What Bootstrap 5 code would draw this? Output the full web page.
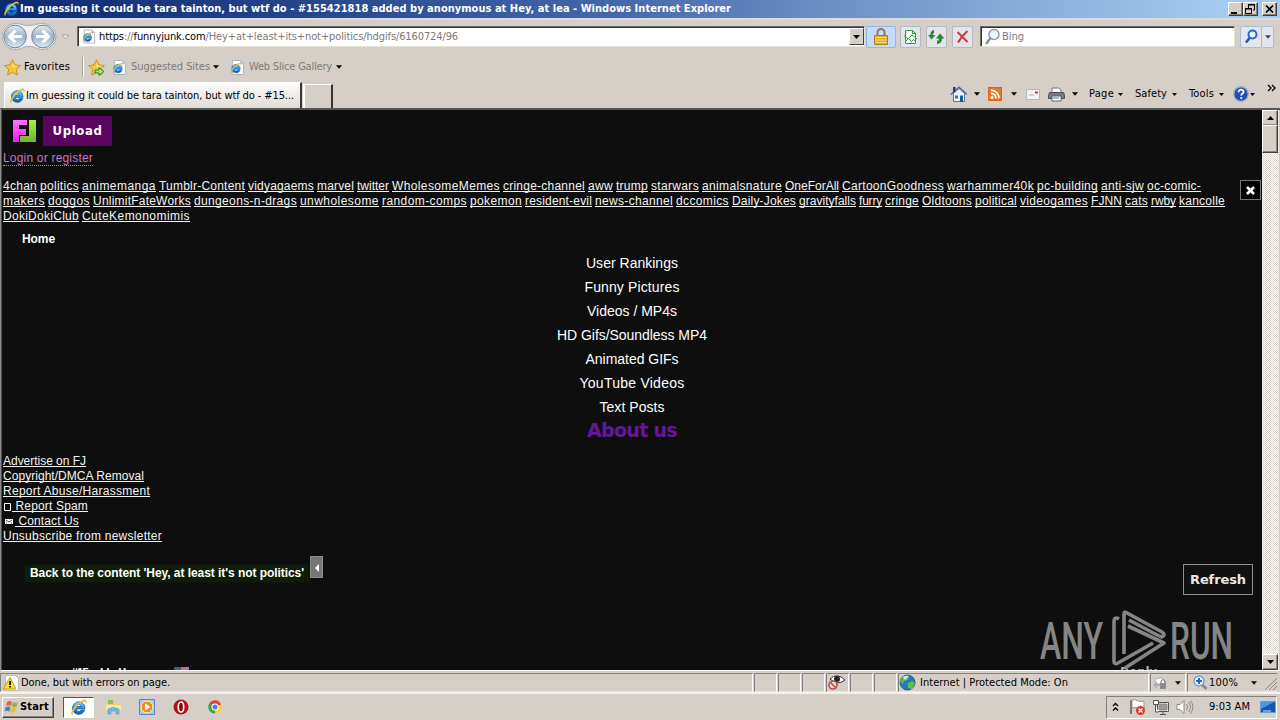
<!DOCTYPE html>
<html lang="en">
<head>
<meta charset="utf-8">
<meta name="viewport" content="width=device-width, initial-scale=1">
<title>Windows Internet Explorer</title>
<link href="https://cdn.jsdelivr.net/npm/bootstrap@5.3.0/dist/css/bootstrap.min.css" rel="stylesheet">
<style>
:root{--face:#d5cfc8;--ui:"DejaVu Sans Condensed","DejaVu Sans",sans-serif;--page:#0e0e0e}
body{width:1280px;height:720px;overflow:hidden;background:var(--face);font:11px/14px var(--ui);color:#000}
svg{display:block;flex:none}
[data-w]{display:inline-block;white-space:pre;flex:none}
.gray{color:#7d7a76}
.titlebar{height:18px;background:linear-gradient(90deg,#0d2a70 0,#1f3f86 240px,#4469aa 620px,#6f91c6 840px,#a6caf0 1230px);color:#fff;font-weight:700;padding-left:3px}
.winbtn{width:15px;height:14px;background:var(--face);border:1px solid;border-color:#fff #404040 #404040 #fff;box-shadow:inset -1px -1px #858078}
.addressrow{height:35px;border-top:2px solid #d8dce0;padding-left:2px}
.field{height:21px;background:#fff;border:1px solid;border-color:#6e6a64 #e4e4da #e4e4da #6e6a64;box-shadow:inset 1px 1px #333}
.dropbtn{width:15px;height:17px;background:var(--face);border:1px solid;border-color:#fff #404040 #404040 #fff}
.toolbtn{width:21px;height:22px;border:1px solid #b4b8c0;border-radius:2px;background:#e4e5ea}
.lockbtn{width:30px;height:22px;background:#c3dcfb;border:1px solid #93b6e4;border-radius:2px}
.favrow{height:28px;padding-left:4px}
.tabrow{height:27px;padding-left:4px}
.tabon{width:298px;height:26px;background:linear-gradient(#fdfdfd,#e0dcd6);border-right:2px solid #3c3a38;border-top:1px solid #fff;border-left:1px solid #fff;padding-left:4px}
.tabnew{width:30px;height:24px;border-top:1px solid #fff;border-left:2px solid #fff;border-right:2px solid #383634;margin-left:1px}
.view{height:563px;border-top:2px solid #565450;border-left:1px solid #8c8c8c;border-bottom:1px solid #fff}
.webpage{width:1261px;background:var(--page);border-left:1px solid #4c4c4c;color:#fff;font:12px/15px "Liberation Sans",Arial,sans-serif;padding-left:1px;overflow:hidden;position:relative}
.webpage a{color:#f4f4f4;text-decoration:underline 1px;text-underline-offset:1px;text-decoration-skip-ink:none}
.upload{width:69px;height:30px;background:#5b045f;font:700 13px/30px "DejaVu Sans Condensed","DejaVu Sans",sans-serif;color:#fff}
.login{color:#cd70cb;border-bottom:1px dotted #9a8a9e;line-height:14px}
.boards{gap:3px}
.closebox{width:21px;height:20px;border:1px solid #777;background:#000}
.menu{font-size:14px;line-height:24px;width:1258px}
.about{font:700 19px/22px "DejaVu Sans",sans-serif;color:#641797}
.back{background:#0f1c07;height:17px;line-height:17px;font-weight:700;padding:0 5px;box-shadow:0 0 2px #0f1c07}
.collapse-tab{width:13px;height:22px;background:#767676;border:1px solid #8e8e8e}
.refresh{width:70px;height:31px;border:1px solid #909090;background:#111;font:700 13px/29px "DejaVu Sans",sans-serif;color:#e8e8e8}
.watermark{left:1036px;top:498px}
.scroller{width:17px;background:repeating-conic-gradient(#fff 0 25%,#d9d4cd 0 50%) 0 0/2px 2px}
.sbtn{width:16px;height:16px;background:var(--face);border:1px solid;border-color:#fff #404040 #404040 #fff;box-shadow:inset -1px -1px #8c877f}
.sthumb{height:28px;margin-top:-1px}
.status{height:23px;padding-top:1px;border-top:1px solid #d5cfc8;border-bottom:2px solid #f4f2ee}
.cell{height:19px;border:1px solid;border-color:#85817c #fff #e9e6e1 #85817c;margin-right:1px}
.taskbar{height:26px}
.start{width:52px;height:21px;border:1px solid;border-color:#fff #404040 #404040 #fff;box-shadow:inset -1px -1px #8a857d;font-weight:700;margin-left:2px}
.taskon{width:31px;height:21px;background:#fff;border:1px solid;border-color:#555 #fff #fff #555}
.tray{width:171px;height:23px;border:1px solid;border-color:#85817c #fff #fff #85817c}
</style>
</head>
<body class="d-flex flex-column">
<svg width="0" height="0" class="position-absolute">
  <defs>
    <linearGradient id="blue" x2="0" y2="1"><stop stop-color="#7fdcfb"/><stop offset=".5" stop-color="#2b9ce6"/><stop offset="1" stop-color="#1250a8"/></linearGradient>
    <linearGradient id="ball" x2="0" y2="1"><stop stop-color="#e4eaf1"/><stop offset=".5" stop-color="#9fb3ca"/><stop offset="1" stop-color="#d5ecf7"/></linearGradient>
    <symbol id="ie" viewBox="0 0 16 16"><path d="M13.800 10.400C12.800 13 10.900 14.300 8.300 14.300 4.800 14.300 2.500 12 2.500 8.600S5 2.800 8.400 2.800s5.700 2.300 5.500 6.500H6c.1 1.500 1 2.500 2.400 2.500.9 0 1.600-.5 2-1.400zM6.100 7.100h4.500C10.400 5.800 9.600 5.100 8.400 5.100S6.300 5.800 6.100 7.100z" fill="url(#blue)" stroke="#1766b5" stroke-width=".9"/><path d="M2.600 14.800C.2 14.500 1.300 10.800 4.600 7 8.500 2.500 13.300-.2 15 1.100c.9.800.5 2-.2 3.200.3-1.500 0-2.200-1.100-2.100-2 .3-5.300 2.600-8 5.700C3.200 10.900 2 13.500 2.600 14.800z" fill="#f8c832" stroke="#a88a20" stroke-width=".2"/></symbol>
    <symbol id="iepage" viewBox="0 0 16 16"><path d="M2.500.5h9l3 3v12h-12z" fill="#fff" stroke="#a8b0ba"/><path d="M11.500.5v3h3" fill="none" stroke="#a8b0ba"/><use href="#ie" x="0" y="2.500" width="12.500" height="12.500"/></symbol>
    <symbol id="star" viewBox="0 0 16 16"><path d="M8 .8l2.200 4.700 5.200.7-3.800 3.600 1 5.200L8 12.500 3.400 15l1-5.200L.6 6.200l5.200-.7z" fill="#fbc637" stroke="#c98313" stroke-width=".8"/><path d="M8 3l1.500 3.200 3 .4-4.500 1z" fill="#ffed9c"/></symbol>
    <symbol id="down" viewBox="0 0 7 4"><path d="M0 0h7L3.500 4z"/></symbol>
  </defs>
</svg>

<header class="titlebar d-flex align-items-center">
  <svg width="16" height="16"><use href="#ie"/></svg>
  <span data-w="711" style="margin-left:1px">Im guessing it could be tara tainton, but wtf do - #155421818 added by anonymous at Hey, at lea - Windows Internet Explorer</span>
  <div class="d-flex ms-auto" style="margin-right:3px">
    <div class="winbtn"><svg width="12" height="12"><path d="M2 9h6v2H2z"/></svg></div>
    <div class="winbtn me-1"><svg width="12" height="12" fill="none" stroke="#000"><path d="M4.500 5V1.500h6V7H9M4 2h7M1.500 5.500h6v5h-6zM1 6h7"/></svg></div>
    <div class="winbtn"><svg width="12" height="12" fill="none" stroke="#000" stroke-width="1.700"><path d="M3 2.500l7 7m0-7l-7 7"/></svg></div>
  </div>
</header>

<div class="addressrow d-flex align-items-center">
  <svg width="75" height="30" viewBox="0 0 75 30">
    <path d="M13 1.500c7 0 7 2 14 2s7-2 14-2a13 13 0 010 26c-7 0-7-3-14-3s-7 3-14 3a13 13 0 010-26z" fill="#f1f1f2" stroke="#a9a8ab"/>
    <g stroke="#73849a"><circle cx="13" cy="14.500" r="11.300" fill="url(#ball)"/><circle cx="41" cy="14.500" r="11.300" fill="url(#ball)"/></g>
    <g fill="none" stroke="#fff" stroke-width="3"><path d="M20 14.500H8m5.500-6l-6 6 6 6"/><path d="M34 14.500h12m-5.500-6l6 6-6 6"/></g>
    <path d="M60 13h7l-3.500 4z" fill="#eee" stroke="#a7a39d"/>
  </svg>
  <div class="field d-flex align-items-center" style="width:788px">
    <svg class="ms-1" width="14" height="15"><use href="#iepage"/></svg>
    <span class="gray" style="margin-left:3px" data-w="359"><span class="text-black">https</span>://<span class="text-black">funnyjunk.com</span>/Hey+at+least+its+not+politics/hdgifs/6160724/96</span>
    <div class="dropbtn ms-auto d-flex align-items-center justify-content-center"><svg width="7" height="4"><use href="#down"/></svg></div>
  </div>
  <div class="lockbtn d-flex justify-content-center align-items-center" style="margin-left:1px"><svg width="16" height="17"><path d="M4.500 8V4.500a3.500 3.500 0 017 0V8" fill="none" stroke="#867a5e" stroke-width="2"/><path d="M1.500 7.500h13v9h-13z" fill="#e8ac2c" stroke="#ae7a17"/><path d="M2 9.500h12M2 12h12M2 14.500h12" stroke="#f9d874"/></svg></div>
  <div class="toolbtn" style="margin-left:4px"><svg width="19" height="20" fill="#f6fff4" stroke="#3a953f"><path d="M4.500 3.500h7l3 3v10h-10zM11.500 3.500v3h3"/><path d="M4.500 14.500l3-3 3 3 2-2 2 2M3 8.500l4 3.500 4-4 5 4" fill="none"/></svg></div>
  <div class="toolbtn" style="margin-left:5px"><svg width="19" height="20" fill="#278a2e"><path d="M7 3v3.500H5.800V8H8.500l-4 4.500L1 8h2.300Q3.300 3.800 7 3z"/><path d="M10 17v-3.500h1.700V11.500H9L13 6.500l4.500 5h-2.500q0 5-5 5.500z"/></svg></div>
  <div class="toolbtn" style="margin-left:5px"><svg width="19" height="20" fill="none" stroke="#c93640" stroke-width="2"><path d="M4.500 5l10 10m0-11C10 8 7 12 5 15.500"/></svg></div>
  <div class="field d-flex align-items-center" style="width:255px;margin-left:7px"><svg width="18" height="18" style="margin-left:2px"><circle cx="11" cy="6.500" r="5" fill="#edf6ff" stroke="#8a9ab5" stroke-width="1.500"/><path d="M7.500 10L3 16" stroke="#8c8792" stroke-width="2.200"/></svg><span class="gray" data-w="22" style="margin-left:1px">Bing</span></div>
  <div class="toolbtn" style="margin-left:5px;width:22px;border-color:#a9bcdc"><svg width="20" height="20"><circle cx="11.500" cy="7.500" r="4" fill="#e8f4ff" stroke="#2a68c8" stroke-width="2"/><path d="M8.500 11L5 15.500" stroke="#2355a8" stroke-width="2.500"/></svg></div>
  <div class="toolbtn d-flex align-items-center justify-content-center" style="width:12px;border-color:#a9bcdc;border-left:0"><svg width="6" height="4" fill="#1e4c93"><use href="#down"/></svg></div>
</div>

<div class="favrow d-flex align-items-center">
  <svg width="17" height="17"><use href="#star"/></svg>
  <span data-w="46" style="margin-left:3px">Favorites</span>
  <div style="width:2px;height:20px;background:#fff;border-left:1px solid #aaa69f;margin:0 4px 0 12px"></div>
  <svg width="17" height="17"><use href="#star"/><path d="M7 11h4V8.500l5 4-5 4V14H7z" fill="#a5e45a" stroke="#27871f"/></svg>
  <svg width="15" height="15" style="margin-left:7px"><use href="#iepage"/></svg>
  <span class="gray" data-w="79" style="margin-left:4px">Suggested Sites</span>
  <svg width="6" height="4" style="margin-left:3px"><use href="#down"/></svg>
  <svg width="15" height="15" style="margin-left:11px"><use href="#iepage"/></svg>
  <span class="gray" data-w="83" style="margin-left:4px">Web Slice Gallery</span>
  <svg width="6" height="4" style="margin-left:4px"><use href="#down"/></svg>
</div>

<div class="tabrow d-flex align-items-end">
  <div class="tabon d-flex align-items-center"><svg width="16" height="16"><use href="#ie"/></svg><span data-w="268" style="margin-left:1px">Im guessing it could be tara tainton, but wtf do - #15...</span></div>
  <div class="tabnew"></div>
  <div class="d-flex align-items-center ms-auto" style="height:28px">
    <svg width="17" height="17"><path d="M3.500 7.500v8h11v-8L9 2.500z" fill="#eef3fb" stroke="#60759c"/><path d="M.8 8.500L9 1.200l8 7.300" fill="none" stroke="#53698f" stroke-width="1.400"/><path d="M3 1h2.500v4L3 7z" fill="#263a82"/><path d="M10 9.500h3V16h-3z" fill="#1a5d8c"/><path d="M5 9.500h3v3H5z" fill="#586e94"/></svg>
    <svg width="6" height="4" style="margin-left:7px"><use href="#down"/></svg>
    <svg width="14" height="14" style="margin-left:8px" fill="none" stroke="#fff" stroke-width="1.700"><rect width="14" height="14" rx="2" fill="#ea7523" stroke="#c85713" stroke-width="1"/><path d="M3 3.200a8 8 0 018 8M3 6.400a5 5 0 015 5"/><circle cx="4" cy="10.500" r=".7"/></svg>
    <svg width="6" height="4" style="margin-left:9px"><use href="#down"/></svg>
    <svg width="14" height="11" style="margin-left:9px"><path d="M.5.500h13v10H.5z" fill="#f3f2f4" stroke="#b6b3ba"/><path d="M9 2.500h3v2H9z" fill="#c73345"/><path d="M3 6h5" stroke="#aaa"/></svg>
    <svg width="17" height="15" style="margin-left:8px"><path d="M4 6V1h7l2 2v3" fill="#fff" stroke="#777"/><path d="M1.500 5.500h14l1 3v3H.5v-3z" fill="#777a80" stroke="#4d5055"/><path d="M4 9h9v5H4z" fill="#fff" stroke="#666"/><path d="M5 11h6" stroke="#4178bb"/></svg>
    <svg width="6" height="4" style="margin-left:7px"><use href="#down"/></svg>
    <span data-w="25" style="margin-left:11px">Page</span>
    <svg width="5" height="3" style="margin-left:4px"><use href="#down"/></svg>
    <span data-w="32" style="margin-left:12px">Safety</span>
    <svg width="5" height="3" style="margin-left:5px"><use href="#down"/></svg>
    <span data-w="25" style="margin-left:12px">Tools</span>
    <svg width="5" height="3" style="margin-left:5px"><use href="#down"/></svg>
    <svg width="16" height="16" style="margin-left:9px"><circle cx="8" cy="8" r="7.300" fill="#244fb0" stroke="#9fb0ce" stroke-width="1.400"/><path d="M5.600 6.200c0-3.500 5-3.200 5-.4 0 1.800-2.400 1.700-2.400 3.700" fill="none" stroke="#fff" stroke-width="1.800"/><circle cx="8.200" cy="12" r="1.100" fill="#fff"/></svg>
    <svg width="5" height="3" style="margin-left:1px"><use href="#down"/></svg>
    <svg width="9" height="20" style="margin:0 4px 0 12px" fill="none" stroke="#000" stroke-width="1.300"><path d="M1 1l3 3-3 3M5 1l3 3-3 3"/></svg>
  </div>
</div>

<div class="view d-flex">
  <main class="webpage">
    <div class="d-flex" style="padding:6px 0 0 9px">
      <svg width="24" height="24" style="margin-top:3px" shape-rendering="crispEdges"><defs><linearGradient id="pink" x2="0" y2="1"><stop stop-color="#ff73ff"/><stop offset="1" stop-color="#f11bf0"/></linearGradient><linearGradient id="lime" x2="0" y2="1"><stop stop-color="#a2f53b"/><stop offset="1" stop-color="#69b72b"/></linearGradient></defs><path d="M1 1h14v5H7v4h7v6H7v7H1z" fill="url(#pink)"/><path d="M17 1h7v22H8v-6h9z" fill="url(#lime)"/></svg>
      <div class="upload text-center" style="margin-left:7px"><span data-w="50">Upload</span></div>
    </div>
    <div style="height:18px;padding-top:5px"><span class="login" data-w="90">Login or register</span></div>
    <nav class="d-flex justify-content-between" style="margin-top:15px">
      <div class="d-flex flex-column align-items-start">
        <div class="boards d-flex"><a href="#" data-w="34">4chan</a> <a href="#" data-w="39">politics</a> <a href="#" data-w="74">animemanga</a> <a href="#" data-w="86">Tumblr-Content</a> <a href="#" data-w="66">vidyagaems</a> <a href="#" data-w="37">marvel</a> <a href="#" data-w="32">twitter</a> <a href="#" data-w="108">WholesomeMemes</a> <a href="#" data-w="82">cringe-channel</a> <a href="#" data-w="25">aww</a> <a href="#" data-w="32">trump</a> <a href="#" data-w="48">starwars</a> <a href="#" data-w="80">animalsnature</a> <a href="#" data-w="54">OneForAll</a> <a href="#" data-w="102">CartoonGoodness</a> <a href="#" data-w="87">warhammer40k</a> <a href="#" data-w="61">pc-building</a> <a href="#" data-w="43">anti-sjw</a> <a href="#" data-w="54">oc-comic-</a></div>
        <div class="boards d-flex"><a href="#" data-w="42">makers</a> <a href="#" data-w="42">doggos</a> <a href="#" data-w="98">UnlimitFateWorks</a> <a href="#" data-w="103">dungeons-n-drags</a> <a href="#" data-w="79">unwholesome</a> <a href="#" data-w="85">random-comps</a> <a href="#" data-w="52">pokemon</a> <a href="#" data-w="67">resident-evil</a> <a href="#" data-w="78">news-channel</a> <a href="#" data-w="53">dccomics</a> <a href="#" data-w="64">Daily-Jokes</a> <a href="#" data-w="57">gravityfalls</a> <a href="#" data-w="23">furry</a> <a href="#" data-w="34">cringe</a> <a href="#" data-w="50">Oldtoons</a> <a href="#" data-w="42">political</a> <a href="#" data-w="68">videogames</a> <a href="#" data-w="31">FJNN</a> <a href="#" data-w="23">cats</a> <a href="#" data-w="25">rwby</a> <a href="#" data-w="46">kancolle</a></div>
        <div class="boards d-flex"><a href="#" data-w="76">DokiDokiClub</a> <a href="#" data-w="108">CuteKemonomimis</a></div>
      </div>
      <div class="closebox d-flex align-items-center justify-content-center" style="margin:1px 1px 0 0"><svg width="9" height="9" stroke="#fff" stroke-width="2.600"><path d="M1 1l7 7M8 1L1 8"/></svg></div>
    </nav>
    <div class="fw-bold" style="margin:8px 0 0 19px;height:19px"><span data-w="33">Home</span></div>
    <div class="menu d-flex flex-column align-items-center">
      <span data-w="92">User Rankings</span>
      <span data-w="95">Funny Pictures</span>
      <span data-w="90">Videos / MP4s</span>
      <span data-w="150">HD Gifs/Soundless MP4</span>
      <span data-w="93">Animated GIFs</span>
      <span data-w="105">YouTube Videos</span>
      <span data-w="65">Text Posts</span>
      <span class="about" data-w="90">About us</span>
    </div>
    <div class="d-flex flex-column align-items-start" style="margin-top:13px">
      <a href="#" data-w="83">Advertise on FJ</a>
      <a href="#" data-w="141">Copyright/DMCA Removal</a>
      <a href="#" data-w="147">Report Abuse/Harassment</a>
      <div class="d-flex"><svg width="9" height="15"><path d="M1.500 4.500h6v7h-6z" fill="none" stroke="#fff"/></svg><a href="#" data-w="76"> Report Spam</a></div>
      <div class="d-flex"><svg width="12" height="15"><path d="M2 5h8v5H2z" fill="#fff"/><path d="M3 6l3 2 3-2M3 9h1m4 0h1" fill="none" stroke="#222" stroke-width=".8"/></svg><a href="#" data-w="64"> Contact Us</a></div>
      <a href="#" data-w="159">Unsubscribe from newsletter</a>
    </div>
    <div class="d-flex align-items-start" style="margin:12px 0 0 22px">
      <div class="back" style="margin-top:9px"><span data-w="274">Back to the content 'Hey, at least it's not politics'</span></div>
      <div class="collapse-tab" style="margin-left:1px"><svg width="11" height="20"><path d="M8 7v8l-4-4z" fill="#fff"/></svg></div>
      <div class="refresh text-center ms-auto" style="margin:8px 9px 0 0"><span data-w="56">Refresh</span></div>
    </div>
    <div class="d-flex align-items-start" style="margin:71px 0 0 68px">
      <span data-w="91" class="fw-bold">#15 added by anon</span>
      <svg width="15" height="10" style="margin:1px 0 0 12px"><path d="M0 0h15v10H0z" fill="#d76872"/><path d="M0 0h7v6H0z" fill="#4852a8"/></svg>
      <b data-w="37" style="margin:-1px 0 0 931px;color:#aaa;font:700 12px/15px 'DejaVu Sans'">Reply</b>
    </div>
    <svg class="watermark position-absolute" width="200" height="62" fill="none" stroke="#858585">
      <g fill="#858585" stroke="none" font-family="Roboto,sans-serif" font-weight="500" font-size="51">
        <text x="2" y="51" textLength="63" lengthAdjust="spacingAndGlyphs">ANY</text>
        <text x="132" y="51" textLength="63" lengthAdjust="spacingAndGlyphs">RUN</text>
      </g>
      <g stroke-linejoin="round" stroke-width="3.600"><path d="M81 11q-5-3-5 3v39q0 4 4 2l35-20"/><path d="M86 46V6q0-3 3-1l35 19q4 3 0 5l-3-1"/><path d="M121 28L91 12"/><path d="M90 18l36 17-39 25"/></g>
    </svg>
  </main>
  <div class="scroller d-flex flex-column">
    <div class="sbtn d-flex align-items-center justify-content-center"><svg width="7" height="4"><path d="M0 4h7L3.500 0z"/></svg></div>
    <div class="sbtn sthumb"></div>
    <div class="sbtn mt-auto d-flex align-items-center justify-content-center"><svg width="7" height="4"><use href="#down"/></svg></div>
  </div>
</div>

<div class="status d-flex align-items-center">
  <div class="cell d-flex align-items-center" style="width:753px"><svg width="17" height="16" style="margin-left:1px"><path d="M3.500.500h10l3 3v12h-13z" fill="#fff" stroke="#bbb"/><path d="M8 2.500l6 11.500H1z" fill="#fbdf2e" stroke="#c09a18"/><path d="M7.200 6h1.700v4H7.200zm0 5h1.700v1.600H7.200z"/></svg><span data-w="149" style="margin-left:2px">Done, but with errors on page.</span></div>
  <div class="cell" style="width:23px"></div><div class="cell" style="width:23px"></div><div class="cell" style="width:23px"></div>
  <div class="cell" style="width:23px"><svg width="19" height="16"><path d="M3 5q7-7 15 1-7 6-15-1z" fill="#fff" stroke="#333"/><circle cx="10" cy="5" r="3" fill="#222"/><circle cx="6" cy="11" r="4" fill="#f2d9d5" stroke="#c5473e" stroke-width="1.600"/><path d="M3.500 8.500l5 5" stroke="#c5473e" stroke-width="1.600"/></svg></div>
  <div class="cell" style="width:23px"></div><div class="cell" style="width:23px"></div>
  <div class="cell d-flex align-items-center" style="width:251px"><svg width="17" height="17"><circle cx="8.500" cy="8.500" r="7.500" fill="#2877c4" stroke="#2b5b8c"/><path d="M3 3q4-2 7-1l-1 4-4 1-1 3-3-2zM9 9l4-2 3 2-3 6-4-1z" fill="#57c442"/><path d="M4 3q3-2 6-1L6 6z" fill="#bcefff"/></svg><span data-w="148" style="margin-left:4px">Internet | Protected Mode: On</span></div>
  <div class="cell d-flex align-items-center" style="width:36px"><svg width="19" height="16"><path d="M4 8a4 4 0 014-5q5-1 6 5" fill="#fff" stroke="#aaa"/><path d="M2 10l4-4v3h4v2H6v3z" fill="#b0aeb0"/><path d="M9 8h6v6H9z" fill="#8d8b90"/><path d="M10 8V6q2-3 4 0v2" fill="none" stroke="#777"/></svg><svg width="6" height="4" style="margin-left:5px"><use href="#down"/></svg></div>
  <div class="cell d-flex align-items-center border-end-0" style="width:90px"><svg width="17" height="16" style="margin-left:4px"><circle cx="7" cy="6" r="5" fill="#e7f6ff" stroke="#7c9ec6" stroke-width="1.400"/><path d="M7 3v6M4 6h6" stroke="#176cc8" stroke-width="2"/><path d="M10.500 10l4 4" stroke="#8b8583" stroke-width="2.500"/></svg><span data-w="29">100%</span><svg width="6" height="4" style="margin-left:13px"><use href="#down"/></svg><svg class="ms-auto" width="13" height="14" stroke="#8a867f"><path d="M1 14L13 2M5 14l8-8M9 14l4-4"/></svg></div>
</div>

<footer class="taskbar d-flex align-items-center">
  <div class="start d-flex align-items-center"><svg width="15" height="16" style="margin-left:1px"><path d="M3 3q3-2 5 0L7 7Q4 5.500 2 7z" fill="#e76438"/><path d="M9 3q3 1.500 5 0l-1.500 4.500Q10 9 8 7.500z" fill="#8bb944"/><path d="M1.500 8.500q3-2 5 0l-1.300 4.200Q3 11 .5 12.500z" fill="#4783c8"/><path d="M7.500 8.500q3 1.500 5 0L11 13q-2 1.500-5 0z" fill="#f6b92a"/></svg><span data-w="29" style="margin-left:1px">Start</span></div>
  <div class="taskon d-flex align-items-center justify-content-center" style="margin-left:9px"><svg width="17" height="17"><use href="#ie"/></svg></div>
  <svg width="17" height="17" style="margin-left:11px"><path d="M1 3h6l1 2h8v5H1z" fill="#ecd27a"/><path d="M3 1h5v4H3z" fill="#8cbd60"/><path d="M1 6h15v5H1z" fill="#f7e9a6"/><path d="M3 15v-5q5-3 11 0v5h-3v-3H6v3z" fill="#74b9e2" stroke="#5693bd" stroke-width=".6"/></svg>
  <svg width="16" height="16" style="margin-left:17px"><path d="M.5.500h15v15H.5z" fill="#a6cbee" stroke="#5288c1"/><circle cx="8" cy="8" r="6" fill="#f08a1d" stroke="#fff2d2"/><path d="M6 4.500v7L11.500 8z" fill="#fff"/></svg>
  <svg width="16" height="16" style="margin-left:18px"><circle cx="8" cy="8" r="7.500" fill="#b3121c"/><ellipse cx="8" cy="8" rx="2.700" ry="5" fill="#8b0911" stroke="#fff" stroke-width="1.600"/></svg>
  <svg width="14" height="14" viewBox="0 0 16 16" style="margin-left:19px"><path d="M8 8L1.500 4A7.500 7.500 0 0115 5z" fill="#e2443a"/><path d="M8 8l7-3a7.500 7.500 0 01-7 10.500z" fill="#f9cd35"/><path d="M8 8v7.500A7.500 7.500 0 011.500 4z" fill="#3ca352"/><circle cx="8" cy="8" r="3.500" fill="#4083e7" stroke="#fff" stroke-width="1.200"/></svg>
  <div class="tray d-flex align-items-center ms-auto" style="margin-right:3px">
    <svg width="7" height="10" style="margin-left:5px" fill="none" stroke="#000" stroke-width="1.300"><path d="M1 4l2.500-2.500L6 4M1 8.500L3.500 6 6 8.500"/></svg>
    <svg width="17" height="18" style="margin-left:10px"><path d="M2 2v14" stroke="#777" stroke-width="2"/><path d="M3 2q3-1 6 1 3 1 6 0v8q-4 1-6-1-3-1-6 0z" fill="#fff" stroke="#999"/><circle cx="11.500" cy="12.500" r="4.500" fill="#d63835"/><path d="M9.500 10.500l4 4m0-4l-4 4" stroke="#fff" stroke-width="1.400"/></svg>
    <svg width="17" height="17" style="margin-left:6px" stroke="#555" fill="#fff"><path d="M5.500 3.500h11v9h-11z"/><path d="M7 5h8v6H7z" fill="#999" stroke="#888"/><path d="M8 15.500h6M11 13v2"/><path d="M1.500 1.500h5v4h-5zM3.500 6v7h3"/></svg>
    <svg width="18" height="16" style="margin-left:7px" stroke="#888" fill="#fff"><path d="M1 5.500h3l4-4v13l-4-4H1z"/><path d="M10.500 5q2 3 0 6M12.500 3q4 5 0 10M14.500 1.500q5 6.500 0 13" fill="none"/></svg>
    <span data-w="41" style="margin-left:15px">9:03 AM</span>
    <svg width="16" height="12" style="margin-left:10px"><path d="M.5.500h15v11H.5z" fill="#1857ad" stroke="#6d9ccd"/><path d="M1 1h13L1 8z" fill="#4b96e0"/><path d="M3 10h8" stroke="#bfe3ff"/></svg>
  </div>
</footer>

<script src="https://cdn.jsdelivr.net/npm/bootstrap@5.3.0/dist/js/bootstrap.bundle.min.js"></script>
<script>
// Spread each label over its declared width by adjusting the letter spacing.
document.querySelectorAll('[data-w]').forEach(function (el) {
  var w = +el.dataset.w, natural = el.getBoundingClientRect().width;
  el.style.letterSpacing = ((w - natural) / el.textContent.length) + 'px';
  el.style.width = w + 'px';
});
</script>
</body>
</html>
